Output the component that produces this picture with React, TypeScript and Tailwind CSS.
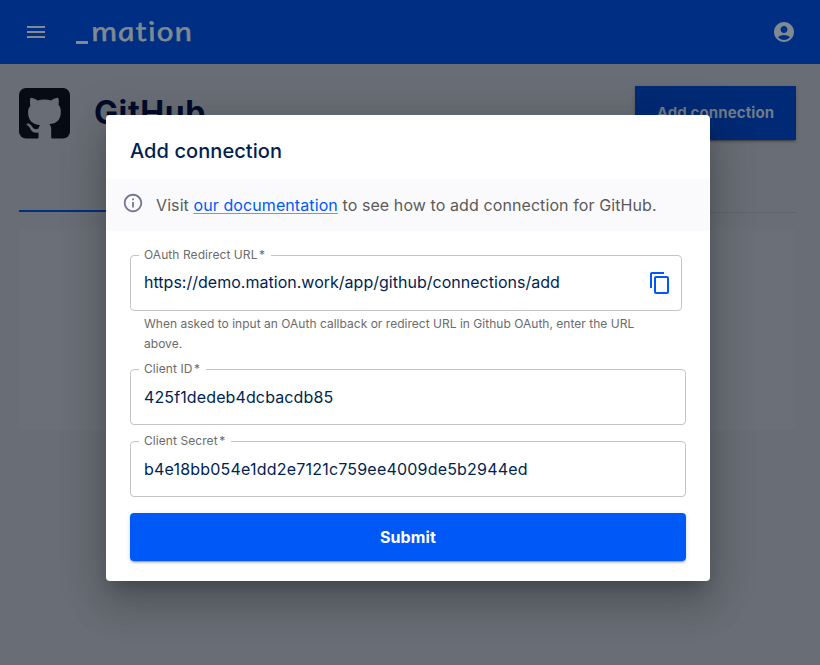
import type { ReactNode } from 'react'
import { MdAccountCircle, MdContentCopy, MdMenu, MdOutlineInfo } from 'react-icons/md'

type FieldProps = {
  label: string
  value: string
  className?: string
  valueClassName?: string
  action?: ReactNode
}

function Field({ label, value, className = '', valueClassName = '', action }: FieldProps) {
  return (
    <div className={`relative flex h-14 items-center justify-between rounded border border-[#c4c4c4] pl-[13px] pr-[9px] ${className}`}>
      <label className="absolute -top-[10px] left-2 bg-white pl-[5px] pr-[6px] text-[12px] leading-[18px] tracking-[0.07px] text-[#6b6b6b]">
        {label} <span className="-ml-[2px]">*</span>
      </label>
      <span className={`text-[16px] leading-6 text-[#001f52] ${valueClassName}`}>{value}</span>
      {action}
    </div>
  )
}

function GitHubIcon() {
  return (
    <svg width="51" height="51" viewBox="0 0 51 51">
      <rect width="51" height="50.5" rx="7" fill="#050c16" />
      <path
        d="M11.5 9.8c1.8-.1 4.6 1.1 7 2.6 4.2-1.2 9.4-1.2 13.6 0 2.4-1.5 5.2-2.7 7-2.6 1 2.3.9 4.8.3 6.8 1.9 2.2 2.6 5 2.4 7.8-.3 7.8-4.3 10.9-11.5 11.8 1.5 1.5 1.9 3 1.9 5.2V49c0 .8.1 1.2.5 2H19c.4-.8.5-1.2.5-2v-4.5c-4.3.9-6.5-.5-7.900-3.2-.8-1.800-1.800-3.100-3.300-4-1.200-.8-1.100-1.700.3-1.800 2.200 0 3.500 1.600 4.500 3.200 1.500 2.500 3.600 3 6.400 1.900.2-1.400.8-2.600 1.700-3.400-7.500-.9-11.900-4.200-12.100-12.100-.1-3 .4-5.100 2.300-7.300-.6-2.200-.7-5.700.1-8Z"
        fill="#696e76"
      />
    </svg>
  )
}

function Page() {
  return (
    <div className="h-full bg-[#696e76]">
      <header className="flex h-16 items-center justify-between bg-[#002e83] px-6 text-[#7f8a91]">
        <div className="flex items-center">
          <MdMenu size={24} />
          <div className="ml-[28px] flex items-end">
            <span className="mb-[7px] h-[3px] w-3 bg-[#7f8a91]" />
            {/* italic letterforms set upright, for the single-storey a */}
            <span className="mb-[2px] ml-[3px] inline-block origin-left scale-x-120 skew-x-[8deg] font-['Lato',sans-serif] text-[27px] italic leading-9 tracking-[0.9px] [-webkit-text-stroke:0.5px_#7f8a91]">
              mation
            </span>
          </div>
        </div>
        <MdAccountCircle size={24} />
      </header>

      <main className="pl-[19px] pr-6 pt-[22px]">
        <div className="flex h-[54px] items-center">
          <GitHubIcon />
          <h1 className="ml-6 text-[32px] font-bold leading-9 tracking-[0.6px] text-[#000c2b]">GitHub</h1>
          <button className="ml-auto h-[54px] w-[161px] bg-[#002a75] text-[15px] font-bold tracking-[0.12px] text-[#6f7b88] shadow-[0_3px_1px_-2px_rgba(0,0,0,0.2),0_2px_2px_0_rgba(0,0,0,0.14),0_1px_5px_0_rgba(0,0,0,0.12)]">
            Add connection
          </button>
        </div>

        <div className="mt-[70px] flex h-[3px] items-end">
          <span className="mb-px h-[2px] w-[380px] bg-[#00307f]" />
          <span className="h-px flex-1 bg-[#5f646b]" />
        </div>

        <div className="mt-4 h-[201px] rounded bg-[#6b7078]" />
      </main>
    </div>
  )
}

function AddConnectionDialog() {
  return (
    <div
      role="dialog"
      className="h-[466px] w-[604px] rounded bg-white shadow-[0_11px_15px_-7px_rgba(0,0,0,0.2),0_24px_38px_3px_rgba(0,0,0,0.14),0_9px_46px_8px_rgba(0,0,0,0.12)]"
    >
      <h2 className="px-6 pb-3 pt-5 text-[20px] font-medium leading-8 tracking-[0.08px] text-[#001f52]">
        Add connection
      </h2>

      <div className="flex h-[52px] items-center bg-[#fafafc] pl-4">
        <MdOutlineInfo size={22} className="mb-1 text-[#76769b]" />
        <p className="ml-3 text-[16px] leading-6 tracking-[0.09px] text-[#5a5a5a]">
          Visit{' '}
          <a href="#" className="text-[#0059f7] underline decoration-[#0059f7]/60 decoration-1 underline-offset-2">
            our documentation
          </a>{' '}
          to see how to add connection for GitHub.
        </p>
      </div>

      <form className="px-6 pt-6">
        <Field
          label="OAuth Redirect URL"
          value="https://demo.mation.work/app/github/connections/add"
          className="mr-1"
          valueClassName="mb-[2px] tracking-[0.015px]"
          action={<MdContentCopy size={24} className="text-[#0059f7]" />}
        />
        <p className="ml-[14px] mr-[18px] mt-[3px] text-[12px] leading-5 tracking-[0.02px] text-[#6b6b6b]">
          When asked to input an OAuth callback or redirect URL in Github OAuth, enter the URL
          <br />
          above.
        </p>
        <Field label="Client ID" value="425f1dedeb4dcbacdb85" className="mt-[15px]" valueClassName="tracking-[0.12px]" />
        <Field
          label="Client Secret"
          value="b4e18bb054e1dd2e7121c759ee4009de5b2944ed"
          className="mt-4"
          valueClassName="tracking-[0.2px]"
        />
        <button
          type="button"
          className="mt-4 h-12 w-full rounded bg-[#0059f7] text-[16px] font-bold tracking-[0.15px] text-white shadow-[0_3px_1px_-2px_rgba(0,0,0,0.2),0_2px_2px_0_rgba(0,0,0,0.14),0_1px_5px_0_rgba(0,0,0,0.12)]"
        >
          Submit
        </button>
      </form>
    </div>
  )
}

export default function App() {
  return (
    <div className="relative h-[665px] w-[820px] overflow-hidden font-['Inter',sans-serif]">
      <Page />
      {/* Modal layer */}
      <div className="absolute inset-0 flex items-start pl-[106px] pt-[115px]">
        <AddConnectionDialog />
      </div>
    </div>
  )
}
